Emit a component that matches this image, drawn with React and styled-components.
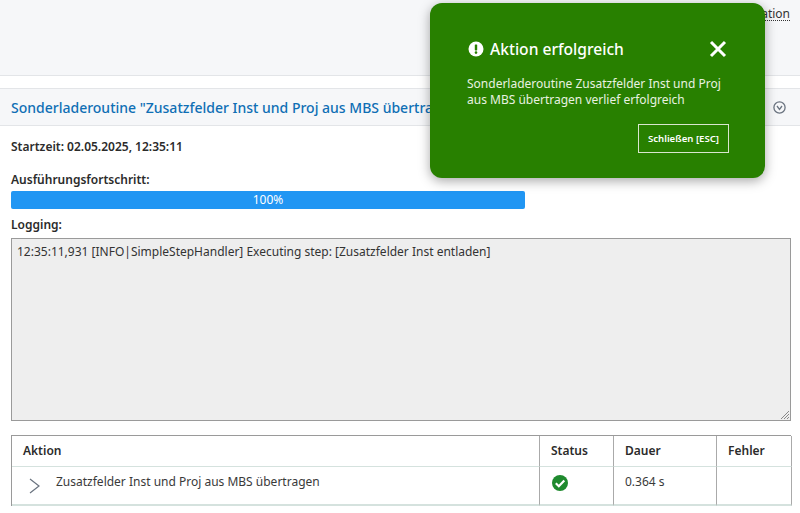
import React from "react"
import styled, { createGlobalStyle } from "styled-components"

const GlobalStyle = createGlobalStyle`
  html, body {
    margin: 0;
    padding: 0;
    background: #fff;
    overflow: hidden;
  }
  body {
    font-family: "Noto Sans", "Open Sans", sans-serif;
    font-size: 12px;
    color: #2b2b2b;
  }
`

const Page = styled.div`
  width: 800px;
  height: 513px;
  overflow: hidden;
  position: relative;
`

const TopBar = styled.div`
  height: 70px;
  background: #f6f7f9;
  border-bottom: 1px solid #e3e5e8;
  display: flex;
  justify-content: flex-end;
  padding: 5px 10px 0 0;
  margin-bottom: 12px;
`

const TopLink = styled.a`
  font-size: 12px;
  line-height: 17px;
  height: 15px;
  color: #333;
  border-bottom: 1px dotted #333;
`

const PanelHeader = styled.div`
  height: 36px;
  background: #f6f7f9;
  border-top: 1px solid #e3e5e8;
  border-bottom: 1px solid #e3e5e8;
  display: flex;
  align-items: center;
  justify-content: space-between;
  padding: 0 14px 0 11px;
  overflow: hidden;
`

const PanelTitle = styled.div`
  font-size: 14px;
  font-weight: 500;
  color: #0f6fb5;
  white-space: nowrap;
`

const Content = styled.div`
  padding: 0 9px 0 11px;
`

const StartTime = styled.div`
  font-size: 12px;
  font-weight: 600;
  line-height: 17px;
  margin-top: 12px;
`

const Label = styled.div`
  font-size: 12px;
  font-weight: 600;
  line-height: 17px;
  margin-top: ${(p) => p.$top}px;
`

const ProgressTrack = styled.div`
  width: 514px;
  height: 18px;
  margin-top: 3px;
  background: #2196f3;
  border-radius: 2px;
  color: #fff;
  font-size: 12px;
  line-height: 18px;
  text-align: center;
`

const LogBox = styled.div`
  position: relative;
  height: 171px;
  margin-top: 5px;
  background: #eeeeee;
  border: 1px solid #9a9a9a;
  padding: 5px;
  font-size: 12px;
  line-height: 16px;
  color: #333;
`

const Grip = styled.svg`
  position: absolute;
  right: 0;
  bottom: 0;
`

const Table = styled.div`
  margin-top: 14px;
  display: grid;
  grid-template-columns: 528px 74px 103px 75px;
  border-top: 1px solid #9a9a9a;
  border-left: 1px solid #9a9a9a;
`

const HeadCell = styled.div`
  height: 30px;
  border-right: 1px solid #aaa;
  border-bottom: 1px solid #d5e2de;
  padding-left: 11px;
  font-size: 12px;
  font-weight: 600;
  line-height: 30px;
`

const BodyCell = styled.div`
  height: 31px;
  border-right: 1px solid #aaa;
  border-bottom: 2px solid #d5e2de;
  padding: 6px 0 0 11px;
  font-size: 12px;
  line-height: 17px;
  color: #3a3a3a;
`

const ActionCell = styled(BodyCell)`
  display: flex;
  align-items: flex-start;
  gap: 14px;
  padding-left: 16px;
`

const Toast = styled.div`
  position: absolute;
  left: 430px;
  top: 3px;
  width: 335px;
  height: 175px;
  box-sizing: border-box;
  background: #288000;
  border-radius: 12px;
  box-shadow: 0 3px 12px rgba(0, 0, 0, 0.35);
  color: #fff;
  padding: 34px 38px 0 38px;
`

const ToastHead = styled.div`
  display: flex;
  align-items: center;
  justify-content: space-between;
  height: 24px;
`

const ToastTitle = styled.div`
  display: flex;
  align-items: center;
  gap: 6px;
  font-size: 15.6px;
  font-weight: 500;
`

const ToastText = styled.div`
  margin-top: 15px;
  font-size: 12px;
  line-height: 16px;
  color: #e8f2e0;
  margin-left: -1px;
`

const ToastActions = styled.div`
  display: flex;
  justify-content: flex-end;
  margin-top: 16px;
  margin-right: -2px;
`

const CloseButton = styled.button`
  width: 91px;
  height: 29px;
  background: transparent;
  border: 1px solid #d9e6cf;
  color: #fff;
  font-family: inherit;
  font-size: 9.6px;
  font-weight: 600;
  padding: 0;
`

export default function App() {
  return (
    <Page>
      <GlobalStyle />
      <TopBar>
        <TopLink>Dokumentation</TopLink>
      </TopBar>
      <PanelHeader>
        <PanelTitle>Sonderladeroutine "Zusatzfelder Inst und Proj aus MBS übertragen"</PanelTitle>
        <svg width="13" height="13" viewBox="0 0 13 13" fill="none" stroke="#6b7480" strokeWidth="1.3">
          <circle cx="6.5" cy="6.5" r="5.6" />
          <path d="M4 5 L6.5 8.4 L9 5" />
        </svg>
      </PanelHeader>
      <Content>
        <StartTime>Startzeit: 02.05.2025, 12:35:11</StartTime>
        <Label $top={16}>Ausführungsfortschritt:</Label>
        <ProgressTrack>100%</ProgressTrack>
        <Label $top={7}>Logging:</Label>
        <LogBox>
          12:35:11,931 [INFO|SimpleStepHandler] Executing step: [Zusatzfelder Inst entladen]
          <Grip width="11" height="11" viewBox="0 0 11 11" stroke="#888" strokeWidth="1">
            <path d="M10 2 L2 10 M10 5 L5 10 M10 8 L8 10" />
          </Grip>
        </LogBox>
        <Table>
          <HeadCell>Aktion</HeadCell>
          <HeadCell>Status</HeadCell>
          <HeadCell>Dauer</HeadCell>
          <HeadCell>Fehler</HeadCell>
          <ActionCell>
            <svg width="14" height="18" viewBox="0 0 14 18" fill="none" stroke="#6b7480" strokeWidth="1.2" style={{ marginTop: 5 }}>
              <path d="M2 1 L11 8 L2 15" />
            </svg>
            <span>Zusatzfelder Inst und Proj aus MBS übertragen</span>
          </ActionCell>
          <BodyCell>
            <svg width="18" height="18" viewBox="0 0 18 18" style={{ marginTop: 1 }}>
              <circle cx="9" cy="9" r="8" fill="#1f8a2e" />
              <path d="M4.8 9.3 L7.8 12.2 L13.3 6.4" fill="none" stroke="#fff" strokeWidth="2.2" />
            </svg>
          </BodyCell>
          <BodyCell>0.364 s</BodyCell>
          <BodyCell />
        </Table>
      </Content>
      <Toast>
        <ToastHead>
          <ToastTitle>
            <svg width="16" height="16" viewBox="0 0 16 16">
              <circle cx="8" cy="8" r="7.5" fill="#fff" />
              <rect x="6.8" y="3.4" width="2.4" height="6" rx="0.6" fill="#288000" />
              <circle cx="8" cy="11.6" r="1.3" fill="#288000" />
            </svg>
            Aktion erfolgreich
          </ToastTitle>
          <svg width="18" height="18" viewBox="0 0 18 18" stroke="#fff" strokeWidth="3">
            <path d="M2 2 L16 16 M16 2 L2 16" />
          </svg>
        </ToastHead>
        <ToastText>
          Sonderladeroutine Zusatzfelder Inst und Proj
          <br />
          aus MBS übertragen verlief erfolgreich
        </ToastText>
        <ToastActions>
          <CloseButton>Schließen [ESC]</CloseButton>
        </ToastActions>
      </Toast>
    </Page>
  )
}
